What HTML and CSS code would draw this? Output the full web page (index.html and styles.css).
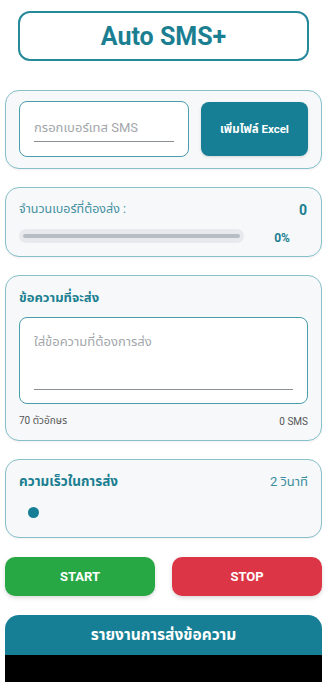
FILE: index.html
```html
<!DOCTYPE html>
<html lang="th">
<head>
    <meta charset="UTF-8">
    <meta name="viewport" content="width=device-width, initial-scale=1.0">
    <title>Auto SMS+</title>
    <link rel="stylesheet" href="styles.css">
</head>
<body>
    <div class="page">
        <div class="title-box">Auto SMS+</div>

        <div class="card card-input">
            <div class="field field-phone">
                <div class="field-text">กรอกเบอร์เทส SMS</div>
            </div>
            <button class="btn-excel" type="button">เพิ่มไฟล์ Excel</button>
        </div>

        <div class="card card-count">
            <div class="row">
                <span class="count-label">จำนวนเบอร์ที่ต้องส่ง :</span>
                <span class="count-value">0</span>
            </div>
            <div class="row progress-row">
                <div class="progress"><div class="progress-line"></div></div>
                <span class="percent">0%</span>
            </div>
        </div>

        <div class="card card-message">
            <div class="card-title">ข้อความที่จะส่ง</div>
            <div class="field field-message">
                <div class="field-text">ใส่ข้อความที่ต้องการส่ง</div>
            </div>
            <div class="row meta">
                <span>70 ตัวอักษร</span>
                <span>0 SMS</span>
            </div>
        </div>

        <div class="card card-speed">
            <div class="row">
                <span class="card-title">ความเร็วในการส่ง</span>
                <span class="speed-value">2 วินาที</span>
            </div>
            <div class="slider"><span class="thumb"></span></div>
        </div>

        <div class="actions">
            <button class="btn btn-start" type="button">START</button>
            <button class="btn btn-stop" type="button">STOP</button>
        </div>

        <div class="report">
            <div class="report-head">รายงานการส่งข้อความ</div>
            <div class="report-body"></div>
        </div>
    </div>
</body>
</html>
```

FILE: styles.css
```css
html, body {
    margin: 0;
    padding: 0;
    background: #ffffff;
}
body {
    font-family: Roboto, "Noto Sans Thai", "Noto Sans", "Liberation Sans", sans-serif;
    color: #333;
    overflow: hidden;
}
.page {
    width: 317px;
    padding: 11px 3px 0 5px;
    border-right: 1px solid #e4e7ea;
    min-height: 682px;
    box-sizing: content-box;
}
.title-box {
    margin: 0 13px 29px 13px;
    height: 46px;
    border: 2px solid #268999;
    border-radius: 12px;
    display: flex;
    align-items: center;
    justify-content: center;
    font-size: 25px;
    font-weight: bold;
    color: #1b7f91;
}
.card {
    background: #f6f8fa;
    border: 1px solid #86c0cb;
    border-radius: 14px;
    margin-bottom: 18px;
    box-sizing: border-box;
    box-shadow: 0 1px 2px rgba(0,0,0,0.06);
}
.row {
    display: flex;
    justify-content: space-between;
    align-items: center;
}
.field {
    background: #fff;
    border: 1px solid #4a9eac;
    border-radius: 8px;
    box-sizing: border-box;
    color: #a3a7ab;
    font-size: 13px;
}
.field-text {
    border-bottom: 1px solid #8a8f94;
}

/* phone input + excel */
.card-input {
    height: 79px;
    padding: 10px 13px;
    display: flex;
    gap: 12px;
}
.field-phone {
    width: 170px;
    height: 56px;
    padding: 16px 14px 0 14px;
}
.field-phone .field-text {
    height: 23px;
}
.btn-excel {
    flex: 1;
    margin-top: 1px;
    height: 54px;
    border: none;
    border-radius: 8px;
    background: #167f95;
    color: #fff;
    font-family: inherit;
    font-size: 11.5px;
    font-weight: bold;
    box-shadow: 0 1px 3px rgba(0,0,0,0.15);
}

/* count + progress */
.card-count {
    height: 70px;
    padding: 12px 13px 0 13px;
}
.count-label {
    font-size: 12.5px;
    color: #4590a0;
}
.count-value {
    font-size: 14px;
    font-weight: bold;
    color: #1b7f91;
    margin-right: 1px;
}
.progress-row {
    margin-top: 8px;
}
.progress {
    width: 225px;
    height: 14px;
    border-radius: 7px;
    background: #e7e9ed;
    display: flex;
    align-items: center;
    padding: 0 4px;
    box-sizing: border-box;
}
.progress-line {
    width: 100%;
    height: 4px;
    border-radius: 2px;
    background: #b8bdc5;
}
.percent {
    font-size: 12px;
    font-weight: bold;
    color: #1b7f91;
    margin-right: 18px;
    margin-top: 4px;
}

/* message */
.card-message {
    height: 166px;
    padding: 12px 13px 0 13px;
}
.card-title {
    font-size: 13px;
    font-weight: bold;
    color: #1b7f91;
}
.field-message {
    margin-top: 9px;
    height: 87px;
    padding: 14px 14px 0 14px;
}
.field-message .field-text {
    height: 57px;
}
.meta {
    margin-top: 9px;
    font-size: 10px;
    color: #555;
}

/* speed */
.card-speed {
    height: 79px;
    padding: 12px 13px 0 13px;
    margin-bottom: 19px;
}
.card-speed .card-title {
    font-size: 13.5px;
}
.speed-value {
    font-size: 13px;
    color: #3d8e9e;
}
.slider {
    margin-top: 15px;
    height: 12px;
}
.thumb {
    display: block;
    width: 11px;
    height: 11px;
    border-radius: 50%;
    background: #167f95;
    margin-left: 9px;
}

/* buttons */
.actions {
    display: flex;
    justify-content: space-between;
    margin-bottom: 19px;
}
.btn {
    width: 150px;
    height: 39px;
    border: none;
    border-radius: 10px;
    color: #fff;
    font-family: inherit;
    font-size: 13px;
    font-weight: bold;
    box-shadow: 0 2px 4px rgba(0,0,0,0.15);
}
.btn-start {
    background: #28a745;
}
.btn-stop {
    background: #dc3545;
}

/* report */
.report-head {
    height: 40px;
    background: #167f95;
    border-radius: 14px 14px 0 0;
    color: #fff;
    font-size: 15.5px;
    font-weight: bold;
    display: flex;
    align-items: center;
    justify-content: center;
}
.report-body {
    height: 40px;
    background: #000;
}
```
